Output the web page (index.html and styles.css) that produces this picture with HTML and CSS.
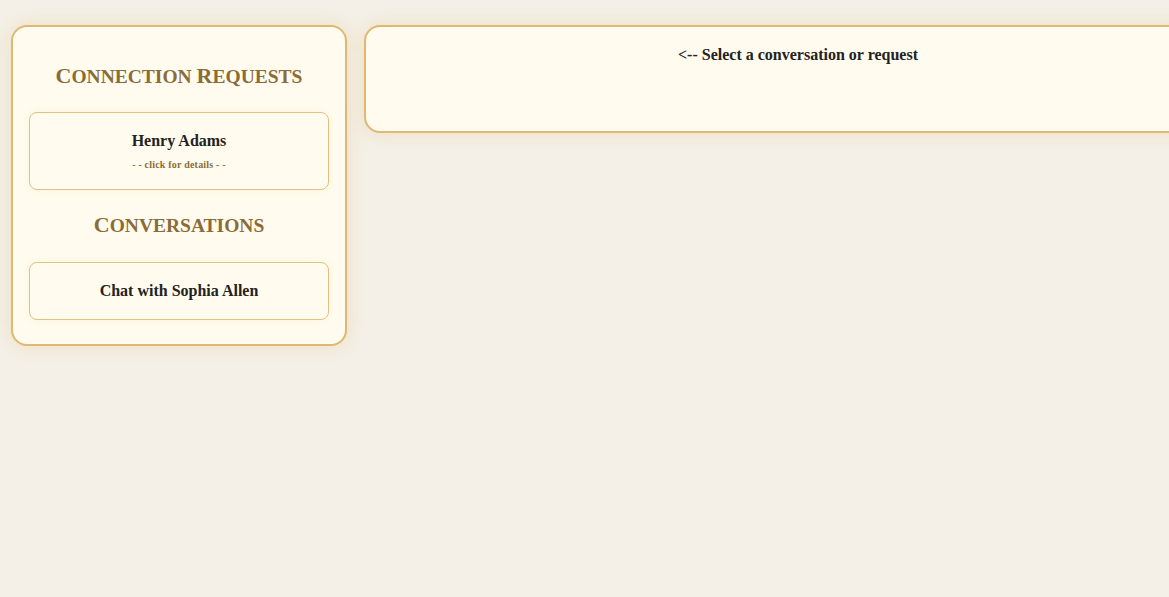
FILE: index.html
```html
<!DOCTYPE html>
<html>
<head>
<meta charset="utf-8">
<link rel="stylesheet" href="styles.css">
</head>
<body>
<div class="layout">
  <aside class="sidebar">
    <h2 class="section-title first"><span class="initial">C</span>onnection <span class="initial">R</span>equests</h2>
    <div class="card request">
      <div class="card-name">Henry Adams</div>
      <div class="card-hint">- - click for details - -</div>
    </div>
    <h2 class="section-title"><span class="initial">C</span>onversations</h2>
    <div class="card chat">
      <div class="card-name">Chat with Sophia Allen</div>
    </div>
  </aside>
  <main class="main-panel">
    <p class="placeholder">&lt;-- Select a conversation or request</p>
  </main>
</div>
</body>
</html>
```
FILE: styles.css
```css
html, body {
  margin: 0;
  padding: 0;
  overflow: hidden;
}
body {
  background: #f4f0e7;
  font-family: "Liberation Serif", "Times New Roman", serif;
  color: #222;
  width: 1169px;
  height: 597px;
}
.layout {
  display: flex;
  align-items: flex-start;
  gap: 17px;
  padding: 25px 0 0 11px;
  width: 1300px;
}
.sidebar, .main-panel {
  background: #fffcef;
  border: 2px solid #dfb872;
  border-radius: 16px;
  box-shadow: 0 0 18px rgba(226, 190, 120, 0.35);
  box-sizing: border-box;
}
.sidebar {
  width: 336px;
  flex: none;
  padding: 16px 16px 24px;
}
.section-title {
  font-family: "Liberation Serif", serif;
  text-transform: uppercase;
  font-weight: bold;
  font-size: 19.5px;
  line-height: 27px;
  height: 24px;
  letter-spacing: 0;
  color: #8b6c37;
  text-align: center;
  margin: 22px 0 26px;
}
.section-title .initial {
  font-size: 22px;
  line-height: 0;
}
.section-title.first {
  margin-top: 20px;
  margin-bottom: 25px;
}
.card {
  border: 1px solid #e2c07f;
  border-radius: 8px;
  background: #fffcef;
  box-shadow: 0 0 10px rgba(232, 200, 130, 0.18);
  padding: 16px;
  text-align: center;
}
.card-name {
  font-weight: bold;
  font-size: 16px;
  line-height: 24px;
  color: #222;
}
.card-hint {
  font-weight: bold;
  font-size: 10px;
  line-height: 16px;
  margin-top: 4px;
  color: #8b6c37;
  letter-spacing: 0.2px;
}
.main-panel {
  width: 868px;
  height: 108px;
  flex: none;
  padding: 16px;
  text-align: center;
}
.placeholder {
  margin: 0;
  font-weight: bold;
  font-size: 16px;
  line-height: 24px;
  color: #222;
}
```
